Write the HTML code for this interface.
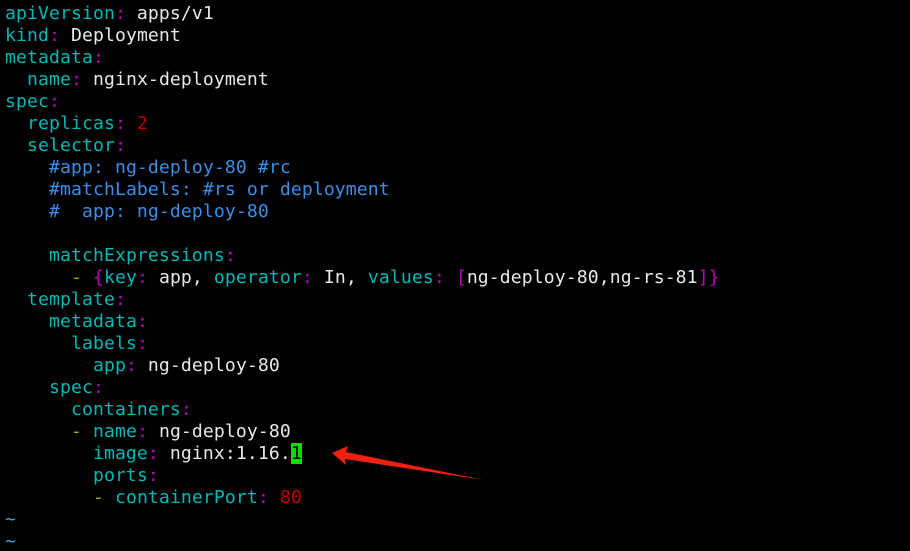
<!DOCTYPE html>
<html><head><style>
html,body{margin:0;padding:0;background:#000;width:910px;height:551px;overflow:hidden}
pre{margin:0;padding:3px 0 0 5px;font-family:"DejaVu Sans Mono","Liberation Mono",monospace;font-size:18.1px;line-height:22px;color:#e8e8e8;letter-spacing:0.1px}
.k{color:#00b8b8}.c{color:#c000c0}.n{color:#c00000}.m{color:#3a8fe8}.y{color:#c0a000}.t{color:#3aa0e0}
.cur{background:#00e000;color:#000}
svg{position:absolute;left:0;top:0}
</style></head><body>
<pre><span class="k">apiVersion</span><span class="c">:</span> apps/v1
<span class="k">kind</span><span class="c">:</span> Deployment
<span class="k">metadata</span><span class="c">:</span>
  <span class="k">name</span><span class="c">:</span> nginx-deployment
<span class="k">spec</span><span class="c">:</span>
  <span class="k">replicas</span><span class="c">:</span> <span class="n">2</span>
  <span class="k">selector</span><span class="c">:</span>
    <span class="m">#app: ng-deploy-80 #rc</span>
    <span class="m">#matchLabels: #rs or deployment</span>
    <span class="m">#  app: ng-deploy-80</span>

    <span class="k">matchExpressions</span><span class="c">:</span>
      <span class="y">-</span> <span class="c">{</span><span class="k">key</span><span class="c">:</span> app, <span class="k">operator</span><span class="c">:</span> In, <span class="k">values</span><span class="c">:</span> <span class="c">[</span>ng-deploy-80,ng-rs-81<span class="c">]}</span>
  <span class="k">template</span><span class="c">:</span>
    <span class="k">metadata</span><span class="c">:</span>
      <span class="k">labels</span><span class="c">:</span>
        <span class="k">app</span><span class="c">:</span> ng-deploy-80
    <span class="k">spec</span><span class="c">:</span>
      <span class="k">containers</span><span class="c">:</span>
      <span class="y">-</span> <span class="k">name</span><span class="c">:</span> ng-deploy-80
        <span class="k">image</span><span class="c">:</span> nginx:1.16.<span class="cur">1</span>
        <span class="k">ports</span><span class="c">:</span>
        <span class="y">-</span> <span class="k">containerPort</span><span class="c">:</span> <span class="n">80</span>
<span class="t">~</span>
<span class="t">~</span></pre>
<svg width="910" height="551"><polygon points="332,453 348,446 346,452 484,480 345,459 346,465" fill="#f02010"/></svg>
</body></html>
